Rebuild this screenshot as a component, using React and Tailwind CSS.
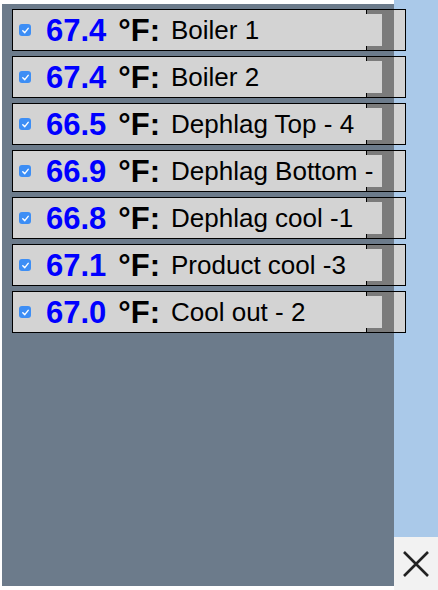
import React from 'react';

const sensors = [
  { value: '67.4', label: 'Boiler 1' },
  { value: '67.4', label: 'Boiler 2' },
  { value: '66.5', label: 'Dephlag Top - 4' },
  { value: '66.9', label: 'Dephlag Bottom -' },
  { value: '66.8', label: 'Dephlag cool -1' },
  { value: '67.1', label: 'Product cool -3' },
  { value: '67.0', label: 'Cool out - 2' },
];

const CheckBox = () => (
  <div className="w-[12px] h-[12px] rounded-[3px] bg-[#3d8ef5] flex items-center justify-center shrink-0">
    <svg width="9" height="9" viewBox="0 0 10 10" fill="none">
      <path d="M2 5.2 L4.2 7.4 L8 2.6" stroke="white" strokeWidth="1.6" strokeLinecap="round" strokeLinejoin="round" />
    </svg>
  </div>
);

const SensorRow = ({ value, label }) => (
  <div className="relative z-10 w-[394px] h-[42px] border border-black bg-[#d3d3d3] overflow-hidden">
    <div className="flex items-center h-full pl-[6px] pr-[22px]">
      <CheckBox />
      <span className="ml-[15px] text-[31px] font-bold text-[#0000ff] leading-none whitespace-nowrap">{value}</span>
      <span className="ml-[12px] text-[31px] font-bold text-black leading-none whitespace-nowrap">°F:</span>
      <span className="ml-[11px] flex-1 min-w-0 h-[30px] overflow-hidden whitespace-nowrap text-[26px] text-black leading-[30px]">{label}</span>
    </div>
    {/* scroll bracket */}
    <div className="absolute left-[353px] top-0 w-[16px] h-[4px] bg-[#7b7b7b] border-l border-black" />
    <div className="absolute left-[353px] bottom-0 w-[16px] h-[4px] bg-[#7b7b7b] border-l border-black" />
    <div className="absolute left-[369px] top-0 bottom-0 w-[12px] bg-[#7b7b7b]" />
  </div>
);

export default function App() {
  return (
    <div className="w-[438px] h-[590px] bg-white flex font-['Liberation_Sans',Arial,sans-serif]">
      <div className="ml-[2px] mt-[4px] mb-[4px] w-[392px] bg-[#6c7b8b] pl-[10px] pt-[5px] flex flex-col gap-[5px]">
        {sensors.map((s, i) => (
          <SensorRow key={i} value={s.value} label={s.label} />
        ))}
      </div>
      <div className="flex-1 flex flex-col">
        <div className="flex-1 bg-[#aac9e9]" />
        <button className="h-[53px] bg-[#f2f2f2] flex items-center justify-center">
          <svg width="28" height="28" viewBox="0 0 28 28">
            <path d="M2 2 L26 26 M26 2 L2 26" stroke="#222" strokeWidth="2.6" />
          </svg>
        </button>
      </div>
    </div>
  );
}
